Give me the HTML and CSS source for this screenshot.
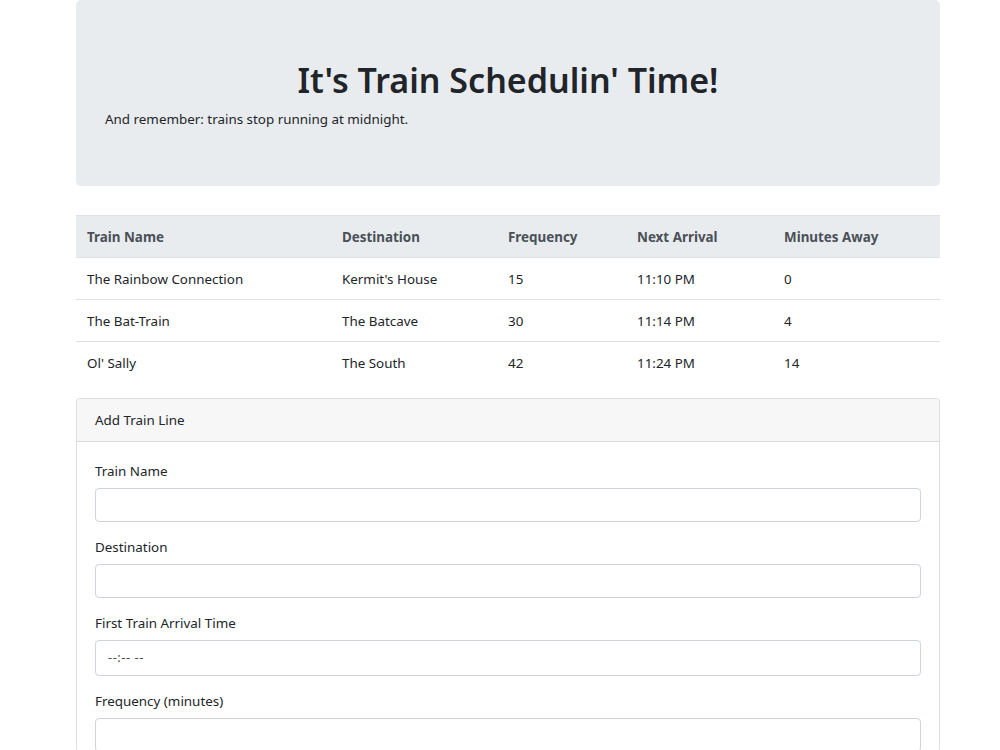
FILE: index.html
```html
<!DOCTYPE html>
<html lang="en">
<head>
<meta charset="utf-8">
<title>Train Scheduler</title>
<link rel="stylesheet" href="styles.css">
</head>
<body>
<div class="container">
  <div class="jumbotron">
    <h1 class="title">It's Train Schedulin' Time!</h1>
    <p class="lead">And remember: trains stop running at midnight.</p>
  </div>

  <table class="schedule">
    <colgroup>
      <col class="c1"><col class="c2"><col class="c3"><col class="c4"><col class="c5">
    </colgroup>
    <thead>
      <tr><th>Train Name</th><th>Destination</th><th>Frequency</th><th>Next Arrival</th><th>Minutes Away</th></tr>
    </thead>
    <tbody>
      <tr><td>The Rainbow Connection</td><td>Kermit's House</td><td>15</td><td>11:10 PM</td><td>0</td></tr>
      <tr><td>The Bat-Train</td><td>The Batcave</td><td>30</td><td>11:14 PM</td><td>4</td></tr>
      <tr><td>Ol' Sally</td><td>The South</td><td>42</td><td>11:24 PM</td><td>14</td></tr>
    </tbody>
  </table>

  <div class="card">
    <div class="card-header">Add Train Line</div>
    <div class="card-body">
      <div class="form-group">
        <label class="label">Train Name</label>
        <div class="input"></div>
      </div>
      <div class="form-group">
        <label class="label">Destination</label>
        <div class="input"></div>
      </div>
      <div class="form-group">
        <label class="label">First Train Arrival Time</label>
        <div class="input time"><span class="time-ph">--:-- --</span></div>
      </div>
      <div class="form-group">
        <label class="label">Frequency (minutes)</label>
        <div class="input"></div>
      </div>
    </div>
  </div>
</div>
</body>
</html>
```

FILE: styles.css
```css
* { box-sizing: border-box; }
html, body { margin: 0; padding: 0; background: #fff; }
body {
  font-family: "Noto Sans", "Open Sans", sans-serif;
  font-size: 13.4px;
  color: #212529;
  line-height: 21.6px;
}
.container {
  width: 864px;
  margin-left: 76px;
}
.jumbotron {
  background: #e9ecef;
  border-radius: 5px;
  padding: 59px 29px 0;
  height: 186px;
  margin-bottom: 29px;
}
.title {
  margin: 0 0 7px;
  text-align: center;
  font-size: 34px;
  font-weight: 600;
  line-height: 43px;
  color: #212529;
}
.lead { margin: 0; }

.schedule {
  width: 864px;
  border-collapse: collapse;
  table-layout: fixed;
  margin-bottom: 14px;
}
.c1 { width: 255px; }
.c2 { width: 166px; }
.c3 { width: 129px; }
.c4 { width: 147px; }
.c5 { width: 167px; }
.schedule th, .schedule td {
  text-align: left;
  padding: 2px 11px 0;
  height: 42px;
  border-top: 1px solid #dee2e6;
  vertical-align: middle;
}
.schedule th {
  background: #e9ecef;
  color: #495057;
  font-weight: 700;
  border-bottom: 1px solid #dee2e6;
}

.card {
  border: 1px solid rgba(0,0,0,.125);
  border-radius: 4px;
  border-bottom: none;
}
.card-header {
  background: #f7f7f7;
  border-bottom: 1px solid rgba(0,0,0,.125);
  padding: 0 18px;
  height: 43px;
  line-height: 42px;
  border-radius: 4px 4px 0 0;
}
.card-body { padding: 18px 18px 0; }
.form-group { margin-bottom: 14px; }
.label { display: block; margin-bottom: 6px; padding-top: 1px; line-height: 21px; }
.input {
  height: 34px;
  border: 1px solid #ced4da;
  border-radius: 4px;
  background: #fff;
}
.input.time { height: 36px; padding-left: 12px; display: flex; align-items: center; }
.time-ph { color: #495057; font-size: 13px; letter-spacing: 0.5px; }
```
